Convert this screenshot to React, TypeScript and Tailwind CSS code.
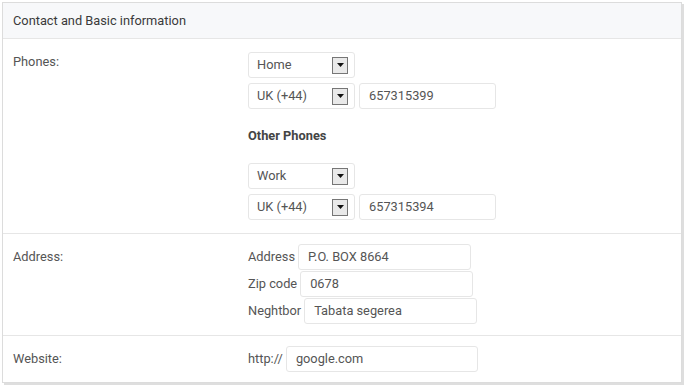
const font = { fontFamily: "Roboto, 'Liberation Sans', sans-serif" };

const Arrow = () => (
  <div className="flex h-[17px] w-[16px] items-center justify-center border border-[#767676] bg-[#e9e9e9]">
    <svg width="7" height="4" viewBox="0 0 7 4">
      <path d="M0 0h7L3.5 4z" fill="#111" />
    </svg>
  </div>
);

const Select = ({ value }: { value: string }) => (
  <div className="flex h-[26px] w-[107px] items-center justify-between rounded-[3px] border border-[#e6e6e6] bg-white pl-[8px] pr-[6px] text-[12.8px] text-[#555]">
    <span>{value}</span>
    <Arrow />
  </div>
);

const Input = ({ value, w }: { value: string; w: string }) => (
  <div className={`flex h-[26px] items-center rounded-[3px] border border-[#e6e6e6] bg-white pl-[9px] text-[12.8px] text-[#555] ${w}`}>
    {value}
  </div>
);

const PhoneGroup = ({ kind, number }: { kind: string; number: string }) => (
  <div className="flex flex-col gap-[5px]">
    <Select value={kind} />
    <div className="flex gap-[4px]">
      <Select value="UK (+44)" />
      <Input value={number} w="w-[137px]" />
    </div>
  </div>
);

export default function App() {
  return (
    <div className="h-[386px] w-[685px] bg-white pl-[2px] pt-[2px]" style={font}>
      <div className="w-[680px] border border-[#dcdcdc] bg-white shadow-[2px_2px_0_#dedede]">
        <div className="flex h-[36px] items-center border-b border-[#e6e6e6] bg-[#f7f8fa] px-[10px] text-[12.8px] text-[#3a3a3a]">
          Contact and Basic information
        </div>

        <div className="grid grid-cols-[235px_1fr] border-b border-[#e6e6e6] pl-[10px] pt-[13px] pb-[13px]">
          <div className="pt-[1px] text-[12.8px] leading-[18px] text-[#555]">Phones:</div>
          <div>
            <PhoneGroup kind="Home" number="657315399" />
            <div className="flex h-[54px] items-center text-[12.8px] font-bold text-[#444]">Other Phones</div>
            <PhoneGroup kind="Work" number="657315394" />
          </div>
        </div>

        <div className="grid grid-cols-[235px_1fr] border-b border-[#e6e6e6] pl-[10px] pt-[10px] pb-[11px]">
          <div className="pt-[4px] text-[12.8px] leading-[18px] text-[#555]">Address:</div>
          <div className="flex flex-col gap-[1px] text-[12.8px] text-[#555]">
            <div className="flex items-center gap-[3px]">
              <span>Address</span>
              <Input value="P.O. BOX 8664" w="w-[173px]" />
            </div>
            <div className="flex items-center gap-[3px]">
              <span>Zip code</span>
              <Input value="0678" w="w-[173px]" />
            </div>
            <div className="flex items-center gap-[3px]">
              <span>Neghtbor</span>
              <Input value="Tabata segerea" w="w-[173px]" />
            </div>
          </div>
        </div>

        <div className="grid grid-cols-[235px_1fr] pl-[10px] pt-[10px] pb-[10px]">
          <div className="pt-[4px] text-[12.8px] leading-[18px] text-[#555]">Website:</div>
          <div className="flex items-center gap-[3px] text-[12.8px] text-[#555]">
            <span>http://</span>
            <Input value="google.com" w="w-[192px]" />
          </div>
        </div>
      </div>
    </div>
  );
}
